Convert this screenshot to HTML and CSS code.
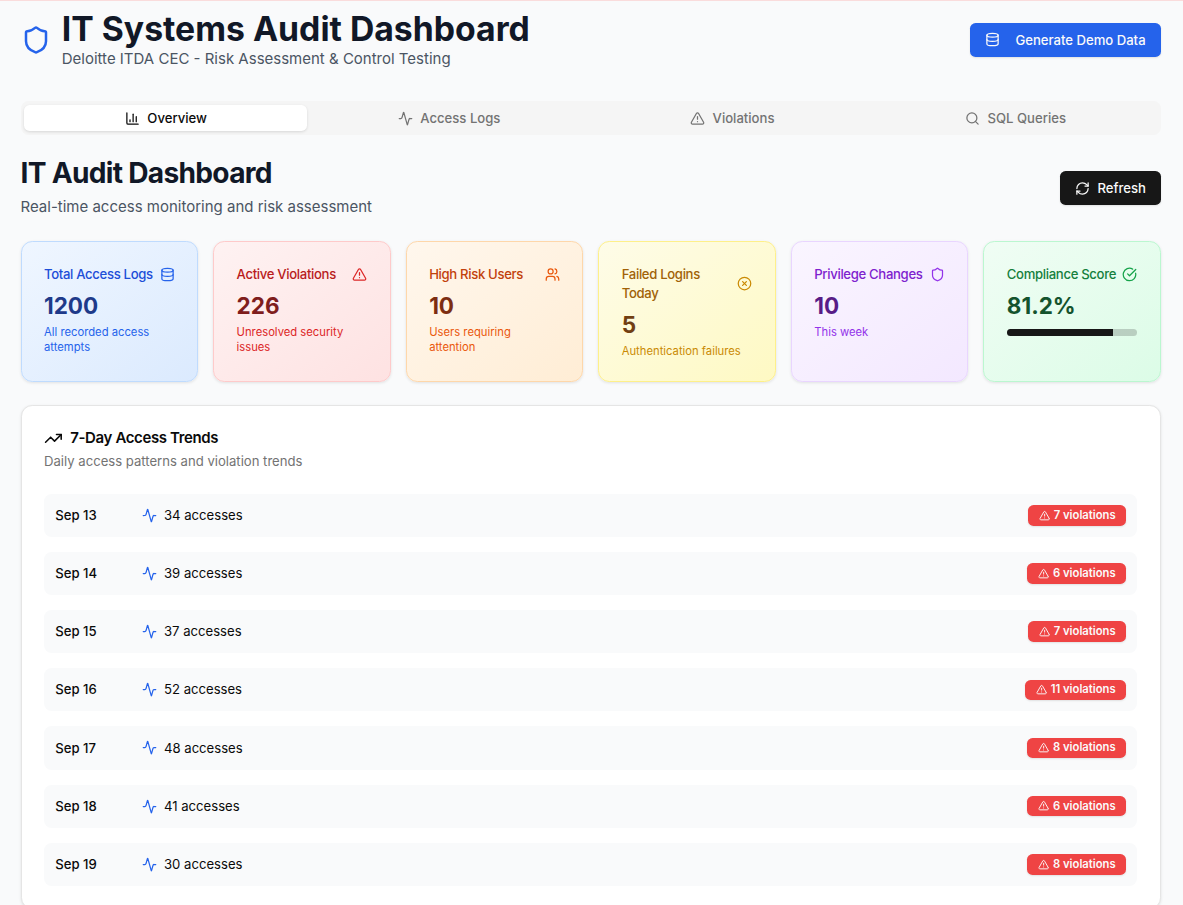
FILE: index.html
```html
<!DOCTYPE html>
<html lang="en">
<head>
<meta charset="utf-8">
<title>IT Systems Audit Dashboard</title>
<link rel="stylesheet" href="styles.css">
</head>
<body>
<svg class="sprite" aria-hidden="true">
  <symbol id="shield" viewBox="0 0 24 24"><path d="M20 13c0 5-3.5 7.5-7.66 8.95a1 1 0 0 1-.67-.01C7.5 20.5 4 18 4 13V6a1 1 0 0 1 1-1c2 0 4.5-1.2 6.24-2.72a1.17 1.17 0 0 1 1.52 0C14.51 3.81 17 5 19 5a1 1 0 0 1 1 1z"/></symbol>
  <symbol id="database" viewBox="0 0 24 24"><ellipse cx="12" cy="5" rx="9" ry="3"/><path d="M3 5v14a9 3 0 0 0 18 0V5"/><path d="M3 12a9 3 0 0 0 18 0"/></symbol>
  <symbol id="chart" viewBox="0 0 24 24"><path d="M3 3v16a2 2 0 0 0 2 2h16"/><path d="M18 17V9"/><path d="M13 17V5"/><path d="M8 17v-3"/></symbol>
  <symbol id="activity" viewBox="0 0 24 24"><path d="M22 12h-2.48a2 2 0 0 0-1.93 1.46l-2.35 8.36a.25.25 0 0 1-.48 0L9.24 2.18a.25.25 0 0 0-.48 0l-2.35 8.36A2 2 0 0 1 4.49 12H2"/></symbol>
  <symbol id="alert" viewBox="0 0 24 24"><path d="m21.73 18-8-14a2 2 0 0 0-3.48 0l-8 14A2 2 0 0 0 4 21h16a2 2 0 0 0 1.73-3"/><path d="M12 9v4"/><path d="M12 17h.01"/></symbol>
  <symbol id="search" viewBox="0 0 24 24"><path d="m21 21-4.34-4.34"/><circle cx="11" cy="11" r="8"/></symbol>
  <symbol id="refresh" viewBox="0 0 24 24"><path d="M3 12a9 9 0 0 1 9-9 9.75 9.75 0 0 1 6.74 2.74L21 8"/><path d="M21 3v5h-5"/><path d="M21 12a9 9 0 0 1-9 9 9.75 9.75 0 0 1-6.74-2.74L3 16"/><path d="M8 16H3v5"/></symbol>
  <symbol id="users" viewBox="0 0 24 24"><path d="M16 21v-2a4 4 0 0 0-4-4H6a4 4 0 0 0-4 4v2"/><path d="M16 3.128a4 4 0 0 1 0 7.744"/><path d="M22 21v-2a4 4 0 0 0-3-3.87"/><circle cx="9" cy="7" r="4"/></symbol>
  <symbol id="circle-x" viewBox="0 0 24 24"><circle cx="12" cy="12" r="10"/><path d="m15 9-6 6"/><path d="m9 9 6 6"/></symbol>
  <symbol id="circle-check" viewBox="0 0 24 24"><path d="M21.801 10A10 10 0 1 1 17 3.335"/><path d="m9 11 3 3L22 4"/></symbol>
  <symbol id="trending" viewBox="0 0 24 24"><path d="M16 7h6v6"/><path d="m22 7-8.5 8.5-5-5L2 17"/></symbol>
</svg>
<main class="page">
  <header class="header">
    <div class="brand">
      <svg class="icon icon-brand"><use href="#shield"/></svg>
      <div>
        <h1 class="brand-title">IT Systems Audit Dashboard</h1>
        <p class="lead">Deloitte ITDA CEC - Risk Assessment &amp; Control Testing</p>
      </div>
    </div>
    <button class="button button-blue"><svg class="icon"><use href="#database"/></svg>Generate Demo Data</button>
  </header>
  <nav class="tabs">
    <a class="tab tab-active"><svg class="icon"><use href="#chart"/></svg>Overview</a>
    <a class="tab"><svg class="icon"><use href="#activity"/></svg>Access Logs</a>
    <a class="tab"><svg class="icon"><use href="#alert"/></svg>Violations</a>
    <a class="tab"><svg class="icon"><use href="#search"/></svg>SQL Queries</a>
  </nav>
  <div class="section-head">
    <div>
      <h2 class="section-title">IT Audit Dashboard</h2>
      <p class="lead section-lead">Real-time access monitoring and risk assessment</p>
    </div>
    <button class="button button-dark"><svg class="icon"><use href="#refresh"/></svg>Refresh</button>
  </div>
  <section class="stats">
    <article class="stat blue">
      <div class="stat-head"><h3 class="stat-title">Total Access Logs</h3><svg class="icon"><use href="#database"/></svg></div>
      <div class="stat-value">1200</div><p class="stat-note">All recorded access attempts</p>
    </article>
    <article class="stat red">
      <div class="stat-head"><h3 class="stat-title">Active Violations</h3><svg class="icon"><use href="#alert"/></svg></div>
      <div class="stat-value">226</div><p class="stat-note">Unresolved security issues</p>
    </article>
    <article class="stat orange">
      <div class="stat-head"><h3 class="stat-title">High Risk Users</h3><svg class="icon"><use href="#users"/></svg></div>
      <div class="stat-value">10</div><p class="stat-note">Users requiring attention</p>
    </article>
    <article class="stat yellow">
      <div class="stat-head"><h3 class="stat-title">Failed Logins Today</h3><svg class="icon"><use href="#circle-x"/></svg></div>
      <div class="stat-value">5</div><p class="stat-note">Authentication failures</p>
    </article>
    <article class="stat purple">
      <div class="stat-head"><h3 class="stat-title">Privilege Changes</h3><svg class="icon"><use href="#shield"/></svg></div>
      <div class="stat-value">10</div><p class="stat-note">This week</p>
    </article>
    <article class="stat green">
      <div class="stat-head"><h3 class="stat-title">Compliance Score</h3><svg class="icon"><use href="#circle-check"/></svg></div>
      <div class="stat-value">81.2%</div><div class="progress"><div class="progress-fill" style="width:81.2%"></div></div>
    </article>
  </section>
  <section class="panel">
    <h3 class="panel-title"><svg class="icon icon-title"><use href="#trending"/></svg>7-Day Access Trends</h3>
    <p class="panel-note">Daily access patterns and violation trends</p>
    <div class="rows">
      <div class="row"><span class="date">Sep 13</span><span class="count"><svg class="icon"><use href="#activity"/></svg>34 accesses</span><span class="badge"><svg class="icon"><use href="#alert"/></svg>7 violations</span></div>
      <div class="row"><span class="date">Sep 14</span><span class="count"><svg class="icon"><use href="#activity"/></svg>39 accesses</span><span class="badge"><svg class="icon"><use href="#alert"/></svg>6 violations</span></div>
      <div class="row"><span class="date">Sep 15</span><span class="count"><svg class="icon"><use href="#activity"/></svg>37 accesses</span><span class="badge"><svg class="icon"><use href="#alert"/></svg>7 violations</span></div>
      <div class="row"><span class="date">Sep 16</span><span class="count"><svg class="icon"><use href="#activity"/></svg>52 accesses</span><span class="badge"><svg class="icon"><use href="#alert"/></svg>11 violations</span></div>
      <div class="row"><span class="date">Sep 17</span><span class="count"><svg class="icon"><use href="#activity"/></svg>48 accesses</span><span class="badge"><svg class="icon"><use href="#alert"/></svg>8 violations</span></div>
      <div class="row"><span class="date">Sep 18</span><span class="count"><svg class="icon"><use href="#activity"/></svg>41 accesses</span><span class="badge"><svg class="icon"><use href="#alert"/></svg>6 violations</span></div>
      <div class="row"><span class="date">Sep 19</span><span class="count"><svg class="icon"><use href="#activity"/></svg>30 accesses</span><span class="badge"><svg class="icon"><use href="#alert"/></svg>8 violations</span></div>
    </div>
  </section>
</main>
</body>
</html>
```
FILE: styles.css
```css
*, *::before, *::after { box-sizing: border-box; margin: 0; }
html { font-size: 15px; }
body {
  height: 905px;
  overflow: hidden;
  background: #f9fafb;
  border-top: 1px solid #fadcdc;
  color: #0a0a0a;
  font-family: Inter, "Liberation Sans", sans-serif;
}
.sprite { display: none; }
.icon {
  width: 1rem;
  height: 1rem;
  flex: none;
  fill: none;
  stroke: currentColor;
  stroke-width: 2;
  stroke-linecap: round;
  stroke-linejoin: round;
}
.page { width: 1140.4px; margin-left: 20.5px; padding-top: 8.6px; }

.header, .section-head { display: flex; align-items: center; justify-content: space-between; }
.brand { display: flex; align-items: center; gap: 11.25px; }
.icon-brand { width: 30px; height: 30px; color: #2563eb; }
.brand-title { color: #111827; font-size: 33.75px; line-height: 37.5px; font-weight: 700; }
.lead { color: #4b5563; font-size: 15px; line-height: 22.5px; }
.brand .lead { margin-top: .8px; }

.button {
  display: inline-flex;
  align-items: center;
  height: 33.75px;
  padding: 0 15px;
  border: 0;
  border-radius: 5.6px;
  color: #fafafa;
  font: 500 13.125px/18.75px Inter, sans-serif;
  box-shadow: 0 1px 2px rgb(0 0 0 / .1);
}
.button-blue { gap: 15px; padding: 0 15.3px; background: #2563eb; }
.button-dark { gap: 7.5px; background: #171717; }

.tabs {
  display: grid;
  grid-template-columns: repeat(4, 1fr);
  height: 33.75px;
  margin-top: 31.1px;
  padding: 3.75px;
  background: #f5f5f5;
  border-radius: 7.5px;
}
.tab {
  display: flex;
  align-items: center;
  justify-content: center;
  gap: 7.5px;
  border-radius: 5.6px;
  color: #737373;
  font-size: 13.125px;
  line-height: 18.75px;
  font-weight: 500;
}
.tab-active { background: #fff; color: #0a0a0a; box-shadow: 0 1px 3px rgb(0 0 0 / .12); }

.section-head { margin-top: 22.1px; }
.section-title { color: #111827; font-size: 28.125px; line-height: 33.75px; font-weight: 700; letter-spacing: -.025em; }
.section-lead { margin-top: 5.2px; }

.stats { display: grid; grid-template-columns: repeat(6, 1fr); gap: 15px; margin-top: 22.5px; }
.stat { padding: 22.5px; border: 1px solid; border-radius: 11.25px; box-shadow: 0 1px 3px rgb(0 0 0 / .1); }
.stat-head { display: flex; align-items: center; justify-content: space-between; padding-bottom: 7.5px; }
.stat-title { font-size: 13.125px; line-height: 18.75px; font-weight: 500; letter-spacing: -.025em; }
.stat-value { font-size: 22.5px; line-height: 30px; font-weight: 700; }
.stat-note { margin-top: 3.75px; font-size: 11.25px; line-height: 15px; }

.blue { background: linear-gradient(to bottom right, #eff6ff, #dbeafe); border-color: #bfdbfe; }
.blue .stat-title { color: #1d4ed8; }
.blue .stat-value { color: #1e3a8a; }
.blue .icon, .blue .stat-note { color: #2563eb; }
.red { background: linear-gradient(to bottom right, #fef2f2, #fee2e2); border-color: #fecaca; }
.red .stat-title { color: #b91c1c; }
.red .stat-value { color: #7f1d1d; }
.red .icon, .red .stat-note { color: #dc2626; }
.orange { background: linear-gradient(to bottom right, #fff7ed, #ffedd5); border-color: #fed7aa; }
.orange .stat-title { color: #c2410c; }
.orange .stat-value { color: #7c2d12; }
.orange .icon, .orange .stat-note { color: #ea580c; }
.yellow { background: linear-gradient(to bottom right, #fefce8, #fef9c3); border-color: #fef08a; }
.yellow .stat-title { color: #a16207; }
.yellow .stat-value { color: #713f12; }
.yellow .icon, .yellow .stat-note { color: #ca8a04; }
.purple { background: linear-gradient(to bottom right, #faf5ff, #f3e8ff); border-color: #e9d5ff; }
.purple .stat-title { color: #7e22ce; }
.purple .stat-value { color: #581c87; }
.purple .icon, .purple .stat-note { color: #9333ea; }
.green { background: linear-gradient(to bottom right, #f0fdf4, #dcfce7); border-color: #bbf7d0; }
.green .stat-title { color: #15803d; }
.green .stat-value { color: #14532d; }
.green .icon { color: #16a34a; }
.progress { height: 7.5px; margin-top: 7.5px; overflow: hidden; border-radius: 8px; background: rgb(23 23 23 / .2); }
.progress-fill { height: 100%; background: #171717; }

.panel {
  margin-top: 23px;
  padding: 22.5px;
  background: #fff;
  border: 1px solid #e5e5e5;
  border-radius: 11.25px;
  box-shadow: 0 1px 3px rgb(0 0 0 / .1);
}
.panel-title { display: flex; align-items: center; gap: 7.5px; font-size: 15px; line-height: 18.75px; font-weight: 600; letter-spacing: -.025em; }
.icon-title { width: 18.75px; height: 18.75px; }
.panel-note { margin-top: 5px; color: #737373; font-size: 13.125px; line-height: 18.75px; }
.rows { display: grid; gap: 15px; margin-top: 22.9px; }
.row { display: flex; align-items: center; height: 43.125px; padding: 0 11.25px; border-radius: 7.5px; background: #f9fafb; font-size: 13.125px; line-height: 18.75px; }
.date { width: 75px; margin-right: 11.25px; font-weight: 500; }
.count { display: flex; align-items: center; gap: 7.5px; }
.count .icon { color: #2563eb; }
.badge {
  display: flex;
  align-items: center;
  gap: 3.9px;
  height: 20.7px;
  margin-left: auto;
  padding: 0 10.5px;
  border-radius: 5.6px;
  background: #ef4444;
  color: #fafafa;
  font-size: 11.25px;
  line-height: 15px;
  font-weight: 600;
  box-shadow: 0 1px 2px rgb(0 0 0 / .1);
}
.badge .icon { width: 11.25px; height: 11.25px; }
```
